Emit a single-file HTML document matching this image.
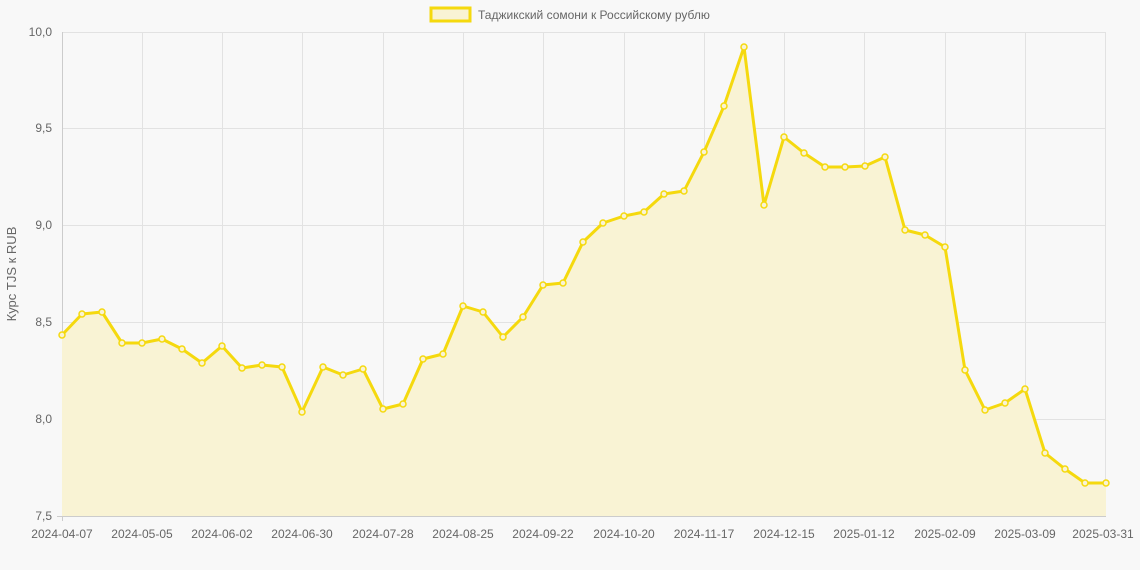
<!DOCTYPE html>
<html><head><meta charset="utf-8"><style>
html,body{margin:0;padding:0;background:#f8f8f8;}
svg{display:block;font-family:"Liberation Sans","Noto Sans CJK SC",sans-serif;}
</style></head><body>
<svg width="1140" height="570" viewBox="0 0 1140 570">
<rect width="1140" height="570" fill="#f8f8f8"/>
<rect x="431" y="8" width="39" height="13" fill="#f9f3d4" stroke="#f5d90e" stroke-width="3"/>
<text x="478" y="19" font-size="12" fill="#666">Таджикский сомони к Российскому рублю</text>
<g stroke="#e2e2e2" stroke-width="1">
<line x1="62" y1="32.5" x2="1106" y2="32.5"/><line x1="62" y1="128.5" x2="1106" y2="128.5"/>
<line x1="62" y1="225.5" x2="1106" y2="225.5"/><line x1="62" y1="322.5" x2="1106" y2="322.5"/>
<line x1="62" y1="419.5" x2="1106" y2="419.5"/>
<line x1="142.5" y1="32" x2="142.5" y2="516"/><line x1="222.5" y1="32" x2="222.5" y2="516"/>
<line x1="302.5" y1="32" x2="302.5" y2="516"/><line x1="383.5" y1="32" x2="383.5" y2="516"/>
<line x1="463.5" y1="32" x2="463.5" y2="516"/><line x1="543.5" y1="32" x2="543.5" y2="516"/>
<line x1="624.5" y1="32" x2="624.5" y2="516"/><line x1="704.5" y1="32" x2="704.5" y2="516"/>
<line x1="784.5" y1="32" x2="784.5" y2="516"/><line x1="864.5" y1="32" x2="864.5" y2="516"/>
<line x1="945.5" y1="32" x2="945.5" y2="516"/><line x1="1025.5" y1="32" x2="1025.5" y2="516"/>
<line x1="1105.5" y1="32" x2="1105.5" y2="516"/>
</g>
<line x1="62.5" y1="32" x2="62.5" y2="521" stroke="#ccc"/>
<line x1="57" y1="516.5" x2="1106" y2="516.5" stroke="#ccc"/>
<g font-size="12" fill="#666" text-anchor="end">
<text x="52" y="36">10,0</text><text x="52" y="132">9,5</text><text x="52" y="229">9,0</text>
<text x="52" y="326">8,5</text><text x="52" y="423">8,0</text><text x="52" y="520">7,5</text>
</g>
<g font-size="12" fill="#666" text-anchor="middle">
<text x="62" y="538">2024-04-07</text><text x="142" y="538">2024-05-05</text><text x="222" y="538">2024-06-02</text>
<text x="302" y="538">2024-06-30</text><text x="383" y="538">2024-07-28</text><text x="463" y="538">2024-08-25</text>
<text x="543" y="538">2024-09-22</text><text x="624" y="538">2024-10-20</text><text x="704" y="538">2024-11-17</text>
<text x="784" y="538">2024-12-15</text><text x="864" y="538">2025-01-12</text><text x="945" y="538">2025-02-09</text>
<text x="1025" y="538">2025-03-09</text><text x="1103" y="538">2025-03-31</text>
</g>
<text transform="translate(16,274) rotate(-90)" font-size="13" fill="#666" text-anchor="middle">Курс TJS к RUB</text>
<polygon fill="#f9f3d4" points="62,516 62,335 82,314 102,312 122,343 142,343 162,339 182,349 202,363 222,346 242,368 262,365 282,367 302,412 323,367 343,375 363,369 383,409 403,404 423,359 443,354 463,306 483,312 503,337 523,317 543,285 563,283 583,242 603,223 624,216 644,212 664,194 684,191 704,152 724,106 744,47 764,205 784,137 804,153 825,167 845,167 865,166 885,157 905,230 925,235 945,247 965,370 985,410 1005,403 1025,389 1045,453 1065,469 1085,483 1106,483 1106,516"/>
<polyline fill="none" stroke="#f5d90e" stroke-width="3" stroke-linejoin="round" points="62,335 82,314 102,312 122,343 142,343 162,339 182,349 202,363 222,346 242,368 262,365 282,367 302,412 323,367 343,375 363,369 383,409 403,404 423,359 443,354 463,306 483,312 503,337 523,317 543,285 563,283 583,242 603,223 624,216 644,212 664,194 684,191 704,152 724,106 744,47 764,205 784,137 804,153 825,167 845,167 865,166 885,157 905,230 925,235 945,247 965,370 985,410 1005,403 1025,389 1045,453 1065,469 1085,483 1106,483"/>
<g fill="#f9f3d4" stroke="#f5d90e" stroke-width="1.5">
<circle cx="62" cy="335" r="3"/><circle cx="82" cy="314" r="3"/><circle cx="102" cy="312" r="3"/><circle cx="122" cy="343" r="3"/><circle cx="142" cy="343" r="3"/><circle cx="162" cy="339" r="3"/><circle cx="182" cy="349" r="3"/><circle cx="202" cy="363" r="3"/><circle cx="222" cy="346" r="3"/><circle cx="242" cy="368" r="3"/><circle cx="262" cy="365" r="3"/><circle cx="282" cy="367" r="3"/><circle cx="302" cy="412" r="3"/><circle cx="323" cy="367" r="3"/><circle cx="343" cy="375" r="3"/><circle cx="363" cy="369" r="3"/><circle cx="383" cy="409" r="3"/><circle cx="403" cy="404" r="3"/><circle cx="423" cy="359" r="3"/><circle cx="443" cy="354" r="3"/><circle cx="463" cy="306" r="3"/><circle cx="483" cy="312" r="3"/><circle cx="503" cy="337" r="3"/><circle cx="523" cy="317" r="3"/><circle cx="543" cy="285" r="3"/><circle cx="563" cy="283" r="3"/><circle cx="583" cy="242" r="3"/><circle cx="603" cy="223" r="3"/><circle cx="624" cy="216" r="3"/><circle cx="644" cy="212" r="3"/><circle cx="664" cy="194" r="3"/><circle cx="684" cy="191" r="3"/><circle cx="704" cy="152" r="3"/><circle cx="724" cy="106" r="3"/><circle cx="744" cy="47" r="3"/><circle cx="764" cy="205" r="3"/><circle cx="784" cy="137" r="3"/><circle cx="804" cy="153" r="3"/><circle cx="825" cy="167" r="3"/><circle cx="845" cy="167" r="3"/><circle cx="865" cy="166" r="3"/><circle cx="885" cy="157" r="3"/><circle cx="905" cy="230" r="3"/><circle cx="925" cy="235" r="3"/><circle cx="945" cy="247" r="3"/><circle cx="965" cy="370" r="3"/><circle cx="985" cy="410" r="3"/><circle cx="1005" cy="403" r="3"/><circle cx="1025" cy="389" r="3"/><circle cx="1045" cy="453" r="3"/><circle cx="1065" cy="469" r="3"/><circle cx="1085" cy="483" r="3"/><circle cx="1106" cy="483" r="3"/>
</g>
</svg>
</body></html>
